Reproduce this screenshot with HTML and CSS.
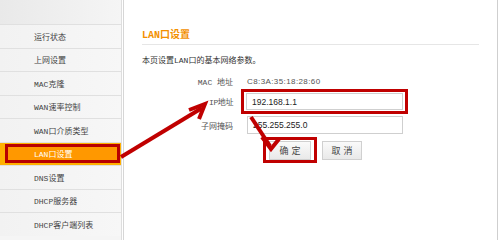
FILE: index.html
```html
<!DOCTYPE html>
<html>
<head>
<meta charset="utf-8">
<link rel="stylesheet" href="styles.css">
</head>
<body>
<div class="page">
  <nav class="sidebar">
    <div class="side-top"></div>
    <ul class="menu">
      <li class="item">运行状态</li>
      <li class="item">上网设置</li>
      <li class="item">MAC克隆</li>
      <li class="item">WAN速率控制</li>
      <li class="item">WAN口介质类型</li>
      <li class="item active"><span class="mark-box">LAN口设置</span></li>
      <li class="item">DNS设置</li>
      <li class="item">DHCP服务器</li>
      <li class="item">DHCP客户端列表</li>
    </ul>
  </nav>
  <main class="main">
    <h1 class="title">LAN口设置</h1>
    <p class="desc">本页设置LAN口的基本网络参数。</p>
    <div class="form">
      <div class="label row-mac">MAC 地址</div>
      <div class="value mac row-mac">C8:3A:35:18:28:60</div>
      <div class="label row-ip">IP地址</div>
      <div class="value row-ip"><span class="red-wrap ip-wrap"><span class="input">192.168.1.1</span></span></div>
      <div class="label row-mask">子网掩码</div>
      <div class="value row-mask"><span class="input mask">255.255.255.0</span></div>
      <div class="label row-btn"></div>
      <div class="value row-btn buttons">
        <span class="red-wrap btn-wrap"><span class="btn">确定</span></span>
        <span class="btn">取消</span>
      </div>
    </div>
  </main>
  <svg class="arrows" width="498" height="240" viewBox="0 0 498 240">
    <g stroke="#c00000" stroke-width="4" fill="none" stroke-linecap="butt" stroke-linejoin="miter">
      <line x1="121" y1="157" x2="202" y2="108"/>
      <polyline points="189,110 205,104 199,119"/>
      <line x1="251" y1="117" x2="270" y2="146"/>
      <polyline points="262,137 271,149 279,139"/>
    </g>
  </svg>
</div>
</body>
</html>
```
FILE: styles.css
```css
html, body {
  margin: 0;
  padding: 0;
  background: #ffffff;
}
.page {
  position: relative;
  display: flex;
  width: 498px;
  height: 240px;
  overflow: hidden;
  font-family: "Liberation Mono", "Noto Sans CJK SC", monospace;
  color: #333;
}
.sidebar {
  width: 121px;
  flex: none;
  background: #f5f5f5;
  border-right: 1px solid #dedede;
}
.side-top {
  height: 24px;
  background: linear-gradient(to right, #e9e9e9, #f5f5f5);
}
.menu {
  list-style: none;
  margin: 0;
  padding: 0;
}
.item {
  height: 22.5px;
  border-top: 1px solid #e0e0e0;
  padding-left: 34px;
  display: flex;
  align-items: center;
  font-size: 8px;
  color: #444;
  background: linear-gradient(to right, #f2f2f2, #f7f7f7);
}
.item.active {
  background: #ffb000;
  padding-left: 5px;
  padding-right: 1px;
}
.mark-box {
  flex: 1;
  height: 13px;
  border: 3px solid #b80000;
  background: #ff9800;
  color: #fff;
  padding-left: 26px;
  display: flex;
  align-items: center;
}
.main {
  flex: 1;
  margin-left: 1px;
  border-left: 1px solid #d6d6d6;
  border-right: 1px solid #cfcfcf;
  padding: 29px 18px 0 18px;
}
.title {
  margin: 0;
  font-size: 10px;
  line-height: 13px;
  font-weight: bold;
  color: #f39000;
  padding-bottom: 2px;
  border-bottom: 1px solid #e6e6e6;
  font-family: "Liberation Mono", "Noto Sans CJK SC", monospace;
}
.desc {
  margin: 10px 0 0 0;
  font-size: 8px;
  line-height: 11px;
  color: #333;
}
.form {
  display: grid;
  grid-template-columns: 91px 1fr;
  column-gap: 14px;
  grid-template-rows: 13px 23px 20px 27px;
  row-gap: 2px;
  margin-top: 9px;
  font-size: 8px;
}
.label {
  text-align: right;
  color: #555;
  display: flex;
  align-items: center;
  justify-content: flex-end;
}
.row-ip.label {
  letter-spacing: -0.4px;
}
.value {
  display: flex;
  align-items: center;
}
.mac {
  font-family: "Liberation Sans", Arial, sans-serif;
  color: #555;
  letter-spacing: 0.4px;
}
.red-wrap {
  display: inline-flex;
  border: 3px solid #c00000;
}
.ip-wrap {
  margin-left: -6px;
  padding: 1px 2px;
}
.input {
  display: flex;
  align-items: center;
  box-sizing: border-box;
  width: 157px;
  height: 17px;
  border: 1px solid #cfcfcf;
  padding-left: 5px;
  font-family: "Liberation Sans", Arial, sans-serif;
  font-size: 8.5px;
  color: #222;
  background: #fff;
}
.mask {
  width: 156px;
  height: 18px;
}
.buttons {
  align-items: flex-start;
  padding-left: 16px;
  gap: 5px;
}
.btn-wrap {
  padding: 1px 3px 0 3px;
}
.btn {
  display: inline-flex;
  align-items: center;
  justify-content: center;
  box-sizing: border-box;
  width: 42px;
  height: 19px;
  border: 1px solid #d0d0d0;
  background: linear-gradient(#fafafa, #e9e9e9);
  font-family: "Noto Sans CJK SC", sans-serif;
  font-size: 9px;
  letter-spacing: 3px;
  padding-left: 3px;
  color: #444;
}
.buttons > .btn {
  width: 40px;
  margin-top: 4px;
}
.arrows {
  position: absolute;
  left: 0;
  top: 0;
  pointer-events: none;
}
```
